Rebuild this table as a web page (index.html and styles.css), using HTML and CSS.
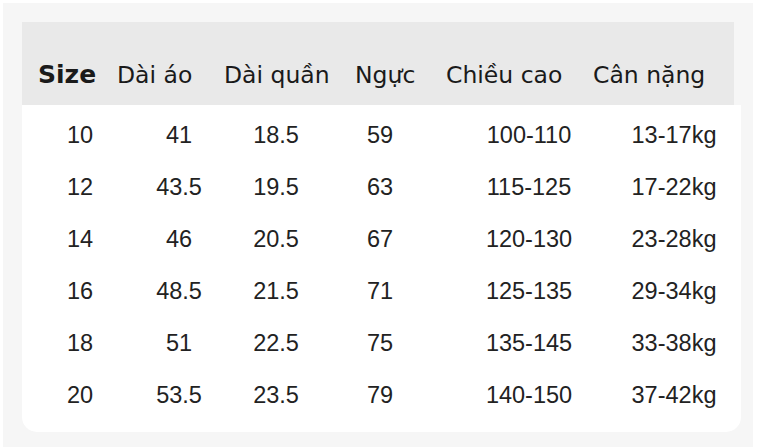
FILE: index.html
```html
<!DOCTYPE html>
<html lang="vi">
<head>
<meta charset="utf-8">
<title>Bảng size</title>
<link rel="stylesheet" href="styles.css">
</head>
<body>
<div class="panel">
  <div class="card">
    <div class="head">
      <div class="hcell bold">Size</div>
      <div class="hcell">Dài áo</div>
      <div class="hcell">Dài quần</div>
      <div class="hcell">Ngực</div>
      <div class="hcell">Chiều cao</div>
      <div class="hcell">Cân nặng</div>
    </div>
    <div class="rows">
      <div class="row"><span>10</span><span>41</span><span>18.5</span><span>59</span><span>100-110</span><span>13-17kg</span></div>
      <div class="row"><span>12</span><span>43.5</span><span>19.5</span><span>63</span><span>115-125</span><span>17-22kg</span></div>
      <div class="row"><span>14</span><span>46</span><span>20.5</span><span>67</span><span>120-130</span><span>23-28kg</span></div>
      <div class="row"><span>16</span><span>48.5</span><span>21.5</span><span>71</span><span>125-135</span><span>29-34kg</span></div>
      <div class="row"><span>18</span><span>51</span><span>22.5</span><span>75</span><span>135-145</span><span>33-38kg</span></div>
      <div class="row"><span>20</span><span>53.5</span><span>23.5</span><span>79</span><span>140-150</span><span>37-42kg</span></div>
    </div>
  </div>
</div>
</body>
</html>
```

FILE: styles.css
```css
html, body {
  margin: 0;
  padding: 0;
  background: #ffffff;
  overflow: hidden;
}
.panel {
  margin: 3px 0 0 3px;
  width: 750px;
  height: 460px;
  background: #f6f6f6;
  padding: 19px 0 0 19px;
  box-sizing: border-box;
}
.card {
  width: 719px;
  background: #ffffff;
  border-radius: 0 0 15px 15px;
  padding-bottom: 11px;
}
.head {
  width: 712px;
  height: 83px;
  box-sizing: border-box;
  background: #e9e9e9;
  padding: 39px 0 0 16px;
  display: grid;
  grid-template-columns: 79px 107px 131px 91px 147px auto;
  align-items: baseline;
  font-family: "DejaVu Sans", sans-serif;
  font-size: 23.5px;
  line-height: 27px;
  color: #1a1a1a;
  box-shadow: 7px 0 0 #f6f6f6;
}
.hcell {
  white-space: nowrap;
}
.bold {
  font-weight: bold;
  font-size: 25px;
}
.rows {
  padding: 4px 0 0 8px;
}
.row {
  display: grid;
  grid-template-columns: 100px 98px 96px 112px 186px 104px;
  height: 52px;
  line-height: 52px;
  font-family: "Liberation Sans", Arial, sans-serif;
  font-size: 23.5px;
  color: #222222;
  text-align: center;
}
```
